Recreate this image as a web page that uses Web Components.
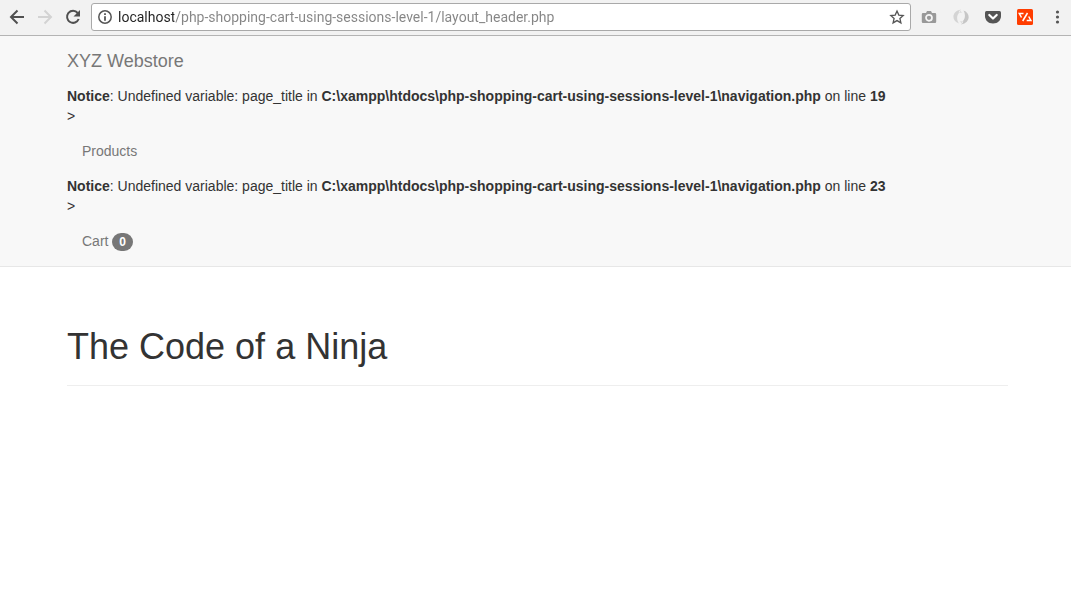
<!DOCTYPE html>
<html lang="en">
<head>
<meta charset="utf-8">
<meta name="viewport" content="width=device-width, initial-scale=1">
<title>The Code of a Ninja</title>
<style>
  body { margin: 0; background: #fff; color: #333; font: 14px/20px "Liberation Sans", Arial, sans-serif; }
</style>
</head>
<body>
<browser-toolbar></browser-toolbar>
<store-navbar>
  <php-notice line="19"></php-notice>
  <nav-item href="#products">Products</nav-item>
  <php-notice line="23"></php-notice>
  <nav-item href="#cart">Cart <count-badge>0</count-badge></nav-item>
</store-navbar>
<page-header>The Code of a Ninja</page-header>

<script>
function define(name, html) {
  customElements.define(name, class extends HTMLElement {
    constructor() {
      super();
      this.attachShadow({ mode: 'open' }).innerHTML = html;
    }
    connectedCallback() {
      const root = this.shadowRoot;
      const line = root.querySelector('.line');
      if (line) line.textContent = this.getAttribute('line');
      const link = root.querySelector('.link');
      if (link) link.setAttribute('href', this.getAttribute('href'));
    }
  });
}

define('browser-toolbar', `
<style>
  :host { display: flex; align-items: center; box-sizing: border-box; height: 36px; padding: 0 6px 2px 9px; background: #f2f2f2; border-bottom: 1px solid #b4b4b4; }
  button { display: block; flex: none; width: 16px; height: 16px; padding: 0; border: 0; background: none; color: #555; }
  svg { display: block; width: 16px; height: 16px; }
  .moves, .tools { display: flex; flex: none; }
  .moves { gap: 12px; }
  .tools { gap: 16px; }
  form { display: flex; align-items: center; flex: 1; min-width: 0; box-sizing: border-box; height: 28px; margin: 0 10px; padding: 0 5px; gap: 5px; border: 1px solid #a9a9a9; border-radius: 3px; background: #fff; }
  input { flex: 1; min-width: 0; height: 20px; padding: 0; border: 0; outline: 0; font: 14px/20px Roboto, "Noto Sans", sans-serif; background: linear-gradient(to right, #222 56px, #858585 56px); -webkit-background-clip: text; background-clip: text; -webkit-text-fill-color: transparent; color: #222; }
</style>
<div class="moves">
  <button aria-label="Back"><svg viewBox="0 0 16 16" fill="none" stroke="#505050" stroke-width="2"><path d="M15 8H2.500M8.500 1.500 2 8l6.500 6.500"/></svg></button>
  <button aria-label="Forward" disabled><svg viewBox="0 0 16 16" fill="none" stroke="#d3d3d3" stroke-width="2"><path d="M1 8h12.500M7.500 1.500 14 8l-6.500 6.500"/></svg></button>
  <button aria-label="Reload"><svg viewBox="0 0 16 16"><path d="M12.700 4A6 6 0 1 0 13.700 10" fill="none" stroke="#505050" stroke-width="2"/><path d="M15 1v6.500H8.500z" fill="#505050"/></svg></button>
</div>
<form>
  <button type="button" aria-label="Site information"><svg viewBox="0 0 16 16"><circle cx="8" cy="8" r="6.200" fill="none" stroke="#555" stroke-width="1.500"/><path d="M7.100 4.300h1.800v1.800H7.100zM7.100 7.200h1.800v4.600H7.100z" fill="#555"/></svg></button>
  <input type="text" aria-label="Address" spellcheck="false" value="localhost/php-shopping-cart-using-sessions-level-1/layout_header.php">
  <button type="button" aria-label="Bookmark"><svg viewBox="0 0 16 16" fill="none" stroke="#555" stroke-width="1.300"><path d="m8 2 1.800 4.100 4.400.4-3.300 3 1 4.400L8 11.600l-3.900 2.300 1-4.400-3.300-3 4.400-.4z"/></svg></button>
</form>
<div class="tools">
  <button aria-label="Screenshot"><svg viewBox="0 0 16 16"><path d="M2 4h3l1-2h4l1 2h3q1.200 0 1.200 1.200v7.600Q15.200 14 14 14H2Q.8 14 .8 12.800V5.200Q.8 4 2 4z" fill="#999"/><circle cx="8" cy="8.800" r="3" fill="#999" stroke="#f5f5f5" stroke-width="1.700"/></svg></button>
  <button aria-label="Refresh extension"><svg viewBox="0 0 16 16"><path d="M6 14.500C-2 12-1.500 2 8 .5 6 2 5.500 3 6 4 3.500 6.500 3.500 11 6 14.500z" fill="#d4d4d4"/><path d="M10.500 1.500C18 4 17.500 14 8 15.500c2-1.500 2.500-2.500 2-3.500 2.500-2.500 2.500-7 .5-10.500z" fill="#c6c6c6"/><path d="M8 .5q-1 2 1.500 3L6 4zM8 15.500q1-2-1.500-3L10 12z" fill="#dcdcdc"/></svg></button>
  <button aria-label="Pocket"><svg viewBox="0 0 16 16"><path d="M1.500 2h13q1.500 0 1.500 1.500V7c0 4-3 7.500-8 7.500S0 11 0 7V3.500Q0 2 1.500 2z" fill="#555"/><path d="m4.300 6 3.700 3.500L11.700 6" fill="none" stroke="#fff" stroke-width="2.200" stroke-linecap="round" stroke-linejoin="round"/></svg></button>
  <button aria-label="Code extension"><svg viewBox="0 0 16 16"><rect width="16" height="16" rx="1.500" fill="#ff3d00"/><path d="M6.500 4.500H2.300L4.500 8.500M10.500 4 5.700 12M11.700 7.500l2.200 4H9.700" fill="none" stroke="#fff" stroke-width="1.500"/></svg></button>
  <button aria-label="Menu"><svg viewBox="0 0 16 16" fill="#555"><circle cx="8.500" cy="3" r="1.600"/><circle cx="8.500" cy="8" r="1.600"/><circle cx="8.500" cy="13" r="1.600"/></svg></button>
</div>`);

define('store-navbar', `
<style>
  :host { display: block; padding: 0 63px 0 67px; background: #f8f8f8; border-bottom: 1px solid #e7e7e7; }
  nav { max-width: 941px; margin: 0 auto; }
  .brand { display: block; width: fit-content; padding: 15px 0; font-size: 18px; line-height: 20px; color: #777; text-decoration: none; }
</style>
<nav><a class="brand" href="#home">XYZ Webstore</a><slot></slot></nav>`);

define('php-notice', `
<style>:host { display: block; }</style>
<b>Notice</b>: Undefined variable: page_title in <b>C:\\xampp\\htdocs\\php-shopping-cart-using-sessions-level-1\\navigation.php</b> on line <b class="line"></b><br>&gt;`);

define('nav-item', `
<style>
  :host { display: block; }
  a { display: block; padding: 15px; color: #777; text-decoration: none; }
</style>
<a class="link"><slot></slot></a>`);

define('count-badge', `
<style>:host { display: inline-block; padding: 3px 7px; border-radius: 10px; background: #777; color: #fff; font-size: 12px; font-weight: bold; line-height: 12px; vertical-align: middle; }</style>
<slot></slot>`);

define('page-header', `
<style>
  :host { display: block; padding: 60px 63px 20px 67px; }
  header { max-width: 941px; margin: 0 auto; padding-bottom: 18px; border-bottom: 1px solid #eee; }
  h1 { margin: 0; font-size: 36px; font-weight: normal; line-height: 40px; }
</style>
<header><h1><slot></slot></h1></header>`);
</script>
</body>
</html>
